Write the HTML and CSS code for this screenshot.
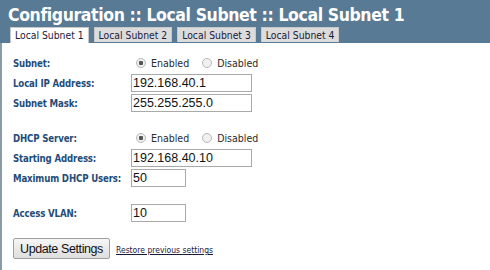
FILE: index.html
```html
<!DOCTYPE html>
<html lang="en">
<head>
    <meta charset="UTF-8">
    <title>Configuration :: Local Subnet</title>
    <link rel="stylesheet" href="styles.css">
</head>
<body>
    <div class="header">
        <h1 class="title">Configuration :: Local Subnet :: Local Subnet 1</h1>
        <div class="tabs">
            <span class="tab active">Local Subnet 1</span>
            <span class="tab">Local Subnet 2</span>
            <span class="tab">Local Subnet 3</span>
            <span class="tab">Local Subnet 4</span>
        </div>
    </div>

    <div class="content">
        <div class="group">
            <div class="row">
                <label class="label">Subnet:</label>
                <span class="radios">
                    <span class="radio checked"></span><span class="opt">Enabled</span>
                    <span class="radio"></span><span class="opt">Disabled</span>
                </span>
            </div>
            <div class="row">
                <label class="label">Local IP Address:</label>
                <input class="field" type="text" value="192.168.40.1">
            </div>
            <div class="row">
                <label class="label">Subnet Mask:</label>
                <input class="field" type="text" value="255.255.255.0">
            </div>
        </div>

        <div class="group">
            <div class="row">
                <label class="label">DHCP Server:</label>
                <span class="radios">
                    <span class="radio checked"></span><span class="opt">Enabled</span>
                    <span class="radio"></span><span class="opt">Disabled</span>
                </span>
            </div>
            <div class="row">
                <label class="label">Starting Address:</label>
                <input class="field" type="text" value="192.168.40.10">
            </div>
            <div class="row">
                <label class="label">Maximum DHCP Users:</label>
                <input class="field short" type="text" value="50">
            </div>
        </div>

        <div class="group">
            <div class="row">
                <label class="label">Access VLAN:</label>
                <input class="field short" type="text" value="10">
            </div>
        </div>

        <div class="actions">
            <button class="button">Update Settings</button>
            <a class="restore" href="#">Restore previous settings</a>
        </div>
    </div>
</body>
</html>
```

FILE: styles.css
```css
* {
    margin: 0;
    padding: 0;
    box-sizing: border-box;
}

body {
    width: 490px;
    height: 270px;
    display: flex;
    flex-direction: column;
    background: white;
    font-family: "DejaVu Sans Condensed", "DejaVu Sans", sans-serif;
    overflow: hidden;
}

.header {
    background: #587a94;
    padding: 4px 0 0 8px;
    height: 43px;
}

.title {
    color: white;
    font-size: 17.5px;
    font-weight: bold;
    letter-spacing: -0.4px;
    line-height: 22px;
    white-space: nowrap;
}

.tabs {
    display: flex;
    gap: 5px;
    margin-top: 1px;
    padding-left: 2px;
}

.tab {
    font-size: 10.3px;
    line-height: 15px;
    height: 15px;
    padding: 0 4px;
    background: #dcdcdc;
    color: #1a1a3a;
    border: 1px solid #c8c8c8;
    border-bottom: none;
}

.tab.active {
    background: white;
    height: 16px;
}

.content {
    flex: 1;
    border-left: 2px solid #8a9aa6;
    padding: 10px 0 0 11px;
}

.group {
    margin-bottom: 15px;
}

.row {
    display: flex;
    align-items: center;
    height: 20px;
}

.label {
    width: 118px;
    font-size: 9.6px;
    font-weight: bold;
    letter-spacing: -0.15px;
    color: #1f4d78;
    white-space: nowrap;
}

.radios {
    display: flex;
    align-items: center;
    padding-left: 5px;
}

.radio {
    width: 10px;
    height: 10px;
    border-radius: 50%;
    border: 1px solid #b8b8b8;
    background: #f0f0f0;
    margin-right: 5px;
}

.radio.checked {
    background: radial-gradient(circle, #555 0 2px, #f0f0f0 2.5px);
}

.opt {
    font-size: 10.5px;
    color: #2a2a2a;
    margin-right: 13px;
}

.field {
    width: 121px;
    height: 18px;
    border: 1px solid #a9a9a9;
    font-family: "Liberation Sans", Arial, sans-serif;
    font-size: 12.5px;
    padding: 0 1px;
    color: #111;
}

.field.short {
    width: 55px;
}

.actions {
    display: flex;
    align-items: center;
    gap: 6px;
    margin-top: 2px;
}

.button {
    font-family: "Liberation Sans", Arial, sans-serif;
    font-size: 12.5px;
    letter-spacing: -0.4px;
    height: 21px;
    width: 97px;
    color: #111;
    background: linear-gradient(#f6f6f6, #dedede);
    border: 1px solid #a0a0a0;
    border-radius: 2px;
}

.restore {
    font-size: 8.5px;
    color: #1a1a3a;
    margin-top: 3px;
}
```
